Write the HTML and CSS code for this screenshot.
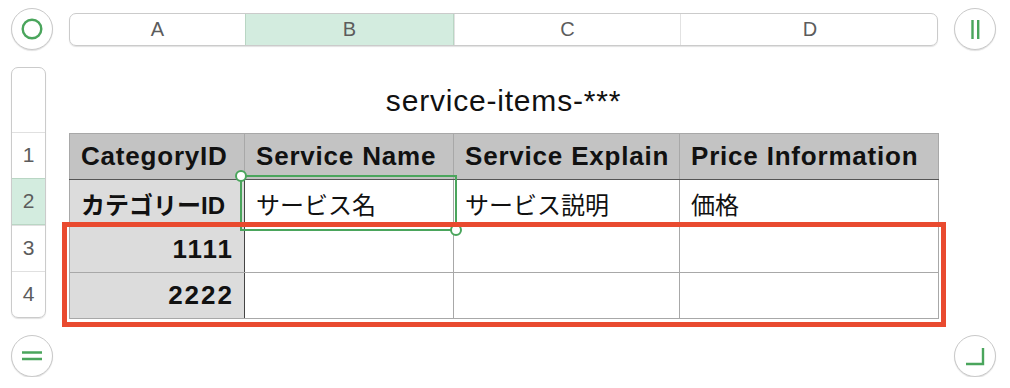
FILE: index.html
```html
<!DOCTYPE html>
<html lang="ja">
<head>
  <meta charset="UTF-8">
  <title>service-items</title>
  <link rel="stylesheet" href="styles.css">
</head>
<body>
  <div class="sheet-view">
    <!-- 上段：全選択ボタン・列ヘッダ・列追加 -->
    <button class="round-btn">
      <svg width="42" height="42" viewBox="0 0 42 42"><circle cx="21" cy="21" r="9.3" fill="none" stroke="#4aa55c" stroke-width="2.4"/></svg>
    </button>
    <div class="col-bar">
      <div class="col-head">A</div>
      <div class="col-head is-active">B</div>
      <div class="col-head">C</div>
      <div class="col-head">D</div>
    </div>
    <button class="round-btn">
      <svg width="42" height="42" viewBox="0 0 42 42"><path d="M18.5 12 V31 M24.2 12 V31" stroke="#4aa55c" stroke-width="2.4" fill="none"/></svg>
    </button>

    <!-- 中段：行ヘッダとシート本体 -->
    <div class="row-bar">
      <div class="row-head is-title"></div>
      <div class="row-head">1</div>
      <div class="row-head is-active">2</div>
      <div class="row-head">3</div>
      <div class="row-head">4</div>
    </div>
    <div class="sheet">
      <div class="sheet-title">service-items-***</div>
      <div class="table-wrap">
        <table class="grid">
          <colgroup>
            <col class="c-a"><col class="c-b"><col class="c-c"><col class="c-d">
          </colgroup>
          <tr class="head-row">
            <td>CategoryID</td>
            <td>Service Name</td>
            <td>Service Explain</td>
            <td>Price Information</td>
          </tr>
          <tr class="sub-row">
            <td class="key ja">カテゴリーID</td>
            <td class="ja">サービス名</td>
            <td class="ja">サービス説明</td>
            <td class="ja">価格</td>
          </tr>
          <tr>
            <td class="key num">1111</td>
            <td></td><td></td><td></td>
          </tr>
          <tr>
            <td class="key num">2222</td>
            <td></td><td></td><td></td>
          </tr>
        </table>
        <div class="selection">
          <span class="handle tl"></span>
          <span class="handle br"></span>
        </div>
        <div class="highlight"></div>
      </div>
    </div>
    <div></div>

    <!-- 下段：行追加・サイズ変更 -->
    <button class="round-btn">
      <svg width="42" height="42" viewBox="0 0 42 42"><path d="M11 17.5 H31 M11 24 H31" stroke="#4aa55c" stroke-width="2.4" fill="none"/></svg>
    </button>
    <div></div>
    <button class="round-btn">
      <svg width="42" height="42" viewBox="0 0 42 42"><path d="M12 29 H29 V13" stroke="#4aa55c" stroke-width="2.4" fill="none"/></svg>
    </button>
  </div>
</body>
</html>
```

FILE: styles.css
```css
body {
  margin: 0;
  background: #fff;
  font-family: "Liberation Sans", "Noto Sans CJK JP", sans-serif;
  color: #111;
}

.sheet-view {
  display: grid;
  grid-template-columns: 42px 869px 42px;
  grid-template-rows: 42px 251px 42px;
  column-gap: 16px;
  row-gap: 17px;
  padding: 8px 0 0 11px;
  align-items: center;
}

.sheet-view > :nth-child(n+6) {
  align-self: start;
}

.round-btn {
  width: 42px;
  height: 42px;
  padding: 0;
  border: 1.5px solid #c9c9c9;
  border-radius: 50%;
  background: #fff;
  box-shadow: 0 1px 1px rgba(0, 0, 0, 0.12);
  display: flex;
  align-items: center;
  justify-content: center;
}

.round-btn svg {
  display: block;
  margin: -1.5px;
}

.col-bar {
  display: grid;
  grid-template-columns: 175px 209px 226px 259px;
  height: 33px;
  border: 1px solid #cbcbcb;
  border-radius: 7px;
  box-shadow: 0 1px 1px rgba(0, 0, 0, 0.12);
  overflow: hidden;
  box-sizing: border-box;
}

.col-head {
  display: flex;
  align-items: center;
  justify-content: center;
  font-size: 20px;
  color: #5c5c5c;
  border-left: 1px solid #e2e2e2;
}

.col-head:first-child {
  border-left: 0;
}

.col-head.is-active {
  background: #d3ecdf;
  border-left: 1px solid #b9d6c4;
  border-right: 1px solid #b9d6c4;
}

.row-bar {
  width: 35px;
  height: 251px;
  border: 1px solid #cbcbcb;
  border-radius: 7px;
  box-shadow: 0 1px 1px rgba(0, 0, 0, 0.12);
  overflow: hidden;
  box-sizing: border-box;
  display: flex;
  flex-direction: column;
}

.row-head {
  height: 46px;
  display: flex;
  align-items: center;
  justify-content: center;
  font-size: 21px;
  color: #5c5c5c;
  border-top: 1px solid #e0e0e0;
}

.row-head.is-title {
  height: 65px;
  border-top: 0;
}

.row-head.is-active {
  background: #d3ecdf;
  border-top-color: #b9d6c4;
  border-bottom: 1px solid #b9d6c4;
  height: 46px;
}

.sheet {
  height: 251px;
}

.sheet-title {
  height: 66px;
  display: flex;
  align-items: center;
  justify-content: center;
  font-size: 30px;
  letter-spacing: 0.8px;
  padding-top: 2px;
  box-sizing: border-box;
}

.table-wrap {
  position: relative;
}

.grid {
  width: 869px;
  table-layout: fixed;
  border-collapse: collapse;
}

.c-a { width: 175px; }
.c-b { width: 209px; }
.c-c { width: 226px; }
.c-d { width: 259px; }

.grid td {
  height: 45px;
  padding: 0 11px;
  border: 1px solid #a8a8a8;
  font-size: 24px;
  white-space: nowrap;
  overflow: hidden;
}

.grid tr.sub-row td {
  height: 46px;
}

.head-row td {
  background: #c3c3c3;
  font-weight: bold;
  font-size: 26px;
  letter-spacing: 0.8px;
  border-bottom: 1px solid #555;
}

.grid td.key {
  background: #dcdcdc;
  font-weight: bold;
  border-right: 1px solid #444;
}

.grid td.ja {
  letter-spacing: 0;
}

.grid td.num {
  text-align: right;
  font-size: 26px;
  letter-spacing: 2px;
  padding-right: 10px;
}

.selection {
  position: absolute;
  left: 171px;
  top: 42px;
  width: 217px;
  height: 56px;
  border: 2px solid #4aa55c;
  box-sizing: border-box;
}

.handle {
  position: absolute;
  width: 12px;
  height: 12px;
  border: 2px solid #4aa55c;
  border-radius: 50%;
  background: #fff;
  box-sizing: border-box;
}

.handle.tl { left: -7px; top: -7px; }
.handle.br { right: -7px; bottom: -7px; }

.highlight {
  position: absolute;
  left: -7px;
  top: 89px;
  width: 884px;
  height: 105px;
  border: 5px solid #e94a2f;
  box-sizing: border-box;
}
```
